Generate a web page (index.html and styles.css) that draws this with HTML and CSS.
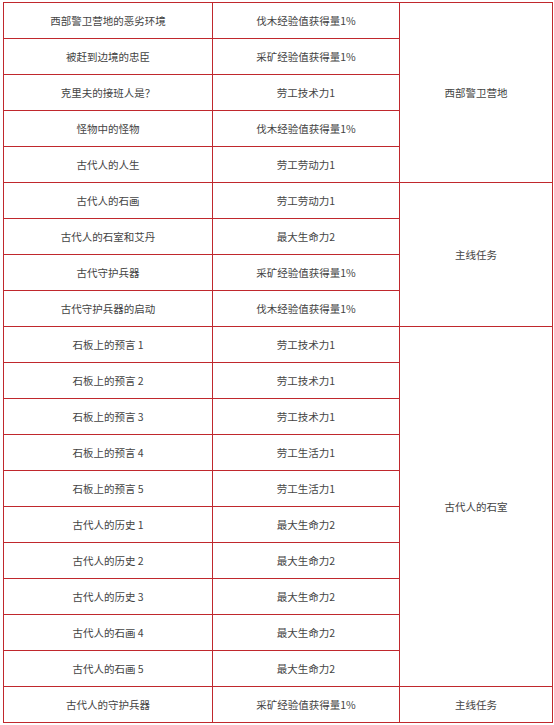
FILE: index.html
```html
<!DOCTYPE html>
<html lang="zh-CN">
<head>
<meta charset="utf-8">
<title>任务表</title>
<link rel="stylesheet" href="styles.css">
</head>
<body>
<table class="quest-table">
  <colgroup>
    <col class="c1">
    <col class="c2">
    <col class="c3">
  </colgroup>
  <tbody>
    <tr><td>西部警卫营地的恶劣环境</td><td>伐木经验值获得量1%</td><td rowspan="5">西部警卫营地</td></tr>
    <tr><td>被赶到边境的忠臣</td><td>采矿经验值获得量1%</td></tr>
    <tr><td>克里夫的接班人是？</td><td>劳工技术力1</td></tr>
    <tr><td>怪物中的怪物</td><td>伐木经验值获得量1%</td></tr>
    <tr><td>古代人的人生</td><td>劳工劳动力1</td></tr>
    <tr><td>古代人的石画</td><td>劳工劳动力1</td><td rowspan="4">主线任务</td></tr>
    <tr><td>古代人的石室和艾丹</td><td>最大生命力2</td></tr>
    <tr><td>古代守护兵器</td><td>采矿经验值获得量1%</td></tr>
    <tr><td>古代守护兵器的启动</td><td>伐木经验值获得量1%</td></tr>
    <tr><td>石板上的预言 1</td><td>劳工技术力1</td><td rowspan="10">古代人的石室</td></tr>
    <tr><td>石板上的预言 2</td><td>劳工技术力1</td></tr>
    <tr><td>石板上的预言 3</td><td>劳工技术力1</td></tr>
    <tr><td>石板上的预言 4</td><td>劳工生活力1</td></tr>
    <tr><td>石板上的预言 5</td><td>劳工生活力1</td></tr>
    <tr><td>古代人的历史 1</td><td>最大生命力2</td></tr>
    <tr><td>古代人的历史 2</td><td>最大生命力2</td></tr>
    <tr><td>古代人的历史 3</td><td>最大生命力2</td></tr>
    <tr><td>古代人的石画 4</td><td>最大生命力2</td></tr>
    <tr><td>古代人的石画 5</td><td>最大生命力2</td></tr>
    <tr><td>古代人的守护兵器</td><td>采矿经验值获得量1%</td><td>主线任务</td></tr>
  </tbody>
</table>
</body>
</html>
```

FILE: styles.css
```css
html, body {
  background: #ffffff;
}
body {
  margin: 2px 0 0 3px;
  font-family: "Noto Sans CJK SC", "Noto Sans", sans-serif;
  font-size: 10.5px;
  color: #444444;
}
.quest-table {
  border-collapse: collapse;
  table-layout: fixed;
  width: 549px;
}
.quest-table .c1 { width: 209px; }
.quest-table .c2 { width: 187px; }
.quest-table .c3 { width: 153px; }
.quest-table td {
  border: 1px solid #c0282d;
  height: 36px;
  padding: 0 4px;
  text-align: center;
  vertical-align: middle;
  line-height: 16px;
  box-sizing: border-box;
}
```
